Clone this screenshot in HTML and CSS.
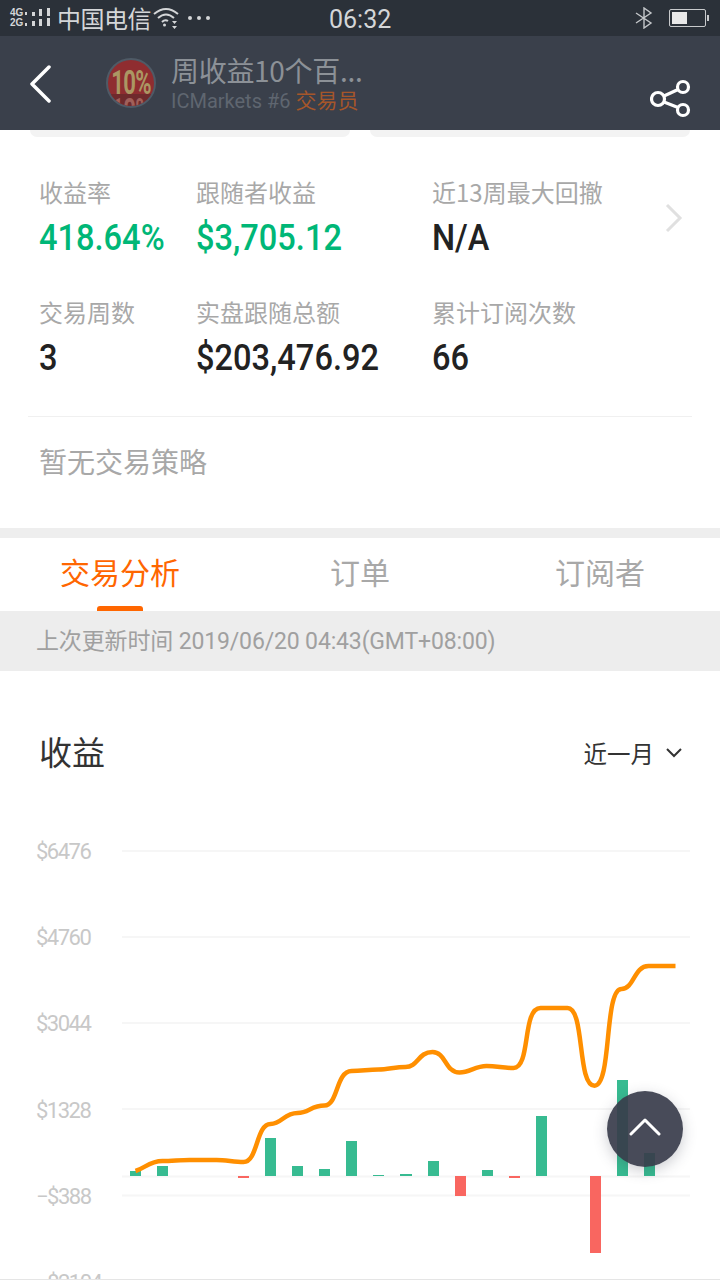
FILE: index.html
```html
<!DOCTYPE html>
<html lang="zh-CN">

<head>
  <meta charset="UTF-8">
  <meta name="viewport" content="width=device-width, initial-scale=1.0">
  <title>周收益10个百</title>
  <link rel="stylesheet" href="styles.css">
</head>

<body>
  <div class="page">
    <!-- status bar -->
    <div class="status">
      <div class="status-left">
        <div class="net"><span>4G</span><span>2G</span></div>
        <svg class="signal" width="26" height="26" viewBox="0 0 26 26" fill="#d4d6d8">
          <rect x="0" y="4" width="2" height="3" />
          <rect x="7" y="4" width="3" height="4" />
          <rect x="14" y="1" width="3" height="7" />
          <rect x="22" y="0" width="3" height="8" />
          <rect x="0" y="15" width="2" height="3" />
          <rect x="7" y="13" width="3" height="5" />
          <rect x="14" y="11" width="3" height="7" />
          <rect x="22" y="10" width="3" height="8" />
        </svg>
        <span class="carrier">中国电信</span>
        <svg class="wifi" width="26" height="24" viewBox="0 0 26 24" fill="none" stroke="#d4d6d8" stroke-width="2">
          <path d="M1 8 Q13 -2 25 8" />
          <path d="M5 12 Q13 5 21 12" />
          <path d="M9 16 Q12 13 15 15" />
          <circle cx="11.500" cy="19" r="1.500" fill="#d4d6d8" stroke="none" />
          <path d="M19 15 l2.500 3 l2.500 -3 z M19 20 h5 l-2.500 3 z" fill="#d4d6d8" stroke="none" />
        </svg>
        <div class="dots"><i></i><i></i><i></i></div>
      </div>
      <span class="time">06:32</span>
      <div class="status-right">
        <svg width="18" height="22" viewBox="0 0 18 22" fill="none" stroke="#c4c7ca" stroke-width="1.400">
          <path d="M1 6 L16 16 L9 21 V1 L16 6 L1 16" />
        </svg>
        <div class="battery"><div class="battery-fill"></div></div>
        <div class="battery-tip"></div>
      </div>
    </div>

    <!-- nav -->
    <div class="nav">
      <svg class="back" width="26" height="40" viewBox="0 0 26 40" fill="none" stroke="#fff" stroke-width="3.500" stroke-linecap="round" stroke-linejoin="round">
        <path d="M21 2 L4 19 L21 36" />
      </svg>
      <svg class="avatar" width="50" height="50" viewBox="0 0 50 50">
        <clipPath id="avatarClip"><circle cx="25" cy="25" r="23" /></clipPath>
        <circle cx="25" cy="25" r="24" fill="#8f2d30" stroke="#4f5a66" stroke-width="2" />
        <g clip-path="url(#avatarClip)">
          <rect x="0" y="36" width="50" height="14" fill="#6f2a2c" />
          <text class="avatar-echo" transform="translate(25 64) scale(0.65 1)">10%</text>
          <text class="avatar-text" transform="translate(25 36) scale(0.65 1)">10%</text>
        </g>
      </svg>
      <div class="title-box">
        <div class="title">周收益10个百...</div>
        <div class="sub">ICMarkets #6 <span class="role">交易员</span></div>
      </div>
      <svg class="share" width="42" height="40" viewBox="0 0 42 40" fill="none" stroke="#fff" stroke-width="3.200">
        <circle cx="8" cy="21" r="6.500" />
        <circle cx="33" cy="9" r="5.500" />
        <circle cx="33" cy="32" r="5.500" />
        <path d="M14 18 L28 11.500 M14 24 L28 29.500" />
      </svg>
    </div>

    <div class="pills"><div class="pill"></div><div class="pill"></div></div>

    <!-- stats -->
    <div class="stats">
      <div class="stat">
        <div class="stat-label">收益率</div>
        <div class="stat-value up">418.64%</div>
      </div>
      <div class="stat">
        <div class="stat-label">跟随者收益</div>
        <div class="stat-value up">$3,705.12</div>
      </div>
      <div class="stat">
        <div class="stat-label">近13周最大回撤</div>
        <div class="stat-value">N/A</div>
      </div>
      <svg class="more" width="18" height="30" viewBox="0 0 18 30" fill="none" stroke="#e0e0e0" stroke-width="3">
        <path d="M2 2 L15 15 L2 28" />
      </svg>
      <div class="stat">
        <div class="stat-label">交易周数</div>
        <div class="stat-value">3</div>
      </div>
      <div class="stat">
        <div class="stat-label">实盘跟随总额</div>
        <div class="stat-value">$203,476.92</div>
      </div>
      <div class="stat">
        <div class="stat-label">累计订阅次数</div>
        <div class="stat-value">66</div>
      </div>
    </div>

    <div class="divider"></div>
    <div class="strategy">暂无交易策略</div>
    <div class="band"></div>

    <!-- tabs -->
    <div class="tabs">
      <div class="tab active">交易分析</div>
      <div class="tab">订单</div>
      <div class="tab">订阅者</div>
    </div>
    <div class="updated">上次更新时间 2019/06/20 04:43(GMT+08:00)</div>

    <div class="chart-head">
      <div class="chart-title">收益</div>
      <div class="range">
        <span>近一月</span>
        <svg width="16" height="10" viewBox="0 0 16 10" fill="none" stroke="#333" stroke-width="2">
          <path d="M1 1 L8 8 L15 1" />
        </svg>
      </div>
    </div>

    <!-- chart, drawn in page coordinates -->
    <div class="chart">
      <svg width="720" height="479" viewBox="0 801 720 479">
        <g class="grid">
          <path d="M122 851 H690" />
          <path d="M122 937 H690" />
          <path d="M122 1023 H690" />
          <path d="M122 1109 H690" />
          <path d="M122 1176.500 H690" />
          <path d="M122 1195.500 H690" />
        </g>
        <g class="axis">
          <text x="36" y="859">$6476</text>
          <text x="36" y="945">$4760</text>
          <text x="36" y="1031">$3044</text>
          <text x="36" y="1118">$1328</text>
          <text x="36" y="1204">−$388</text>
          <text x="36" y="1290">−$2104</text>
        </g>
        <g class="bars-up">
          <rect x="130" y="1171" width="11" height="5" />
          <rect x="157" y="1166" width="11" height="10" />
          <rect x="265" y="1138" width="11" height="38" />
          <rect x="292" y="1166" width="11" height="10" />
          <rect x="319" y="1169" width="11" height="7" />
          <rect x="346" y="1141" width="11" height="35" />
          <rect x="373" y="1175" width="11" height="1" />
          <rect x="400" y="1174" width="12" height="2" />
          <rect x="428" y="1161" width="11" height="15" />
          <rect x="482" y="1170" width="11" height="6" />
          <rect x="536" y="1116" width="11" height="60" />
          <rect x="617" y="1080" width="11" height="96" />
          <rect x="644" y="1153" width="11" height="23" />
        </g>
        <g class="bars-down">
          <rect x="238" y="1176" width="11" height="2" />
          <rect x="455" y="1176" width="11" height="20" />
          <rect x="509" y="1176" width="11" height="2" />
          <rect x="590" y="1176" width="11" height="77" />
        </g>
        <path class="profit-line" d="M135.500 1171 C145 1168,150 1161,162.500 1161 C172 1161,180 1160,189.500 1160 C198 1160,207 1160,216.500 1160 C226 1160,234 1162,243.500 1162 C258 1162,256 1124,270.500 1124 C282 1124,284 1113,297.500 1113 C309 1113,311 1105.600,324.500 1105.600 C338 1105.600,336 1071,351.500 1071 C362 1071,368 1069.500,378.500 1069.500 C388 1069.500,395 1067,405.500 1067 C418 1067,418 1052,432.500 1052 C446 1052,445 1072.500,459.500 1072.500 C470 1072.500,475 1066,486.500 1066 C497 1066,503 1068,513.500 1068 C531 1068,522 1008,540.500 1008 C550 1008,558 1008,567.500 1008 C585 1008,577 1085.700,594.500 1085.700 C612 1085.700,604 989,621.500 989 C634 989,634 966,648.500 966 L675.500 966" />
      </svg>
    </div>

    <div class="to-top">
      <svg width="32" height="20" viewBox="0 0 32 20" fill="none" stroke="#fff" stroke-width="3" stroke-linecap="round" stroke-linejoin="round">
        <path d="M2 17 L16 3 L30 17" />
      </svg>
    </div>
  </div>
</body>

</html>
```

FILE: styles.css
```css
* {
  box-sizing: border-box;
}

body {
  margin: 0;
  background-color: #fff;
  font-family: "Noto Sans CJK SC", "Liberation Sans", sans-serif;
}

.page {
  position: relative;
  width: 720px;
  height: 1280px;
  overflow: hidden;
}

/* status bar */
.status {
  position: relative;
  display: flex;
  align-items: center;
  justify-content: space-between;
  height: 36px;
  padding: 0 10px;
  background-color: #2b3139;
  color: #d4d6d8;
}

.status-left {
  display: flex;
  align-items: center;
}

.net {
  display: flex;
  flex-direction: column;
  width: 15px;
  font-family: "Liberation Sans", sans-serif;
  font-size: 10px;
  font-weight: 700;
  line-height: 10px;
}

.signal {
  margin-top: 6px;
}

.carrier {
  margin-left: 6px;
  font-size: 24px;
  letter-spacing: -0.5px;
  line-height: 36px;
}

.wifi {
  margin-left: 2px;
}

.dots {
  display: flex;
  gap: 5px;
  margin-left: 9px;
}

.dots i {
  width: 4px;
  height: 4px;
  border-radius: 50%;
  background-color: #d4d6d8;
}

.time {
  position: absolute;
  left: 329px;
  top: 1px;
  font-family: "Roboto", sans-serif;
  font-size: 25px;
  line-height: 38px;
}

.status-right {
  display: flex;
  align-items: center;
  margin-right: 1px;
}

.battery {
  width: 37px;
  height: 18px;
  margin-left: 16px;
  padding: 2px;
  border: 1px solid #c8cacc;
  border-radius: 2px;
}

.battery-fill {
  width: 15px;
  height: 100%;
  background-color: #e8e8e8;
}

.battery-tip {
  width: 2px;
  height: 6px;
  margin-left: 1px;
  background-color: #c8cacc;
}

/* nav */
.nav {
  display: flex;
  align-items: center;
  height: 94px;
  padding: 0 28px;
  background-color: #3a404b;
}

.back {
  margin-top: 3px;
}

.avatar {
  margin-left: 52px;
  flex-shrink: 0;
}

.avatar-text,
.avatar-echo {
  font-family: "Roboto", sans-serif;
  font-size: 34px;
  font-weight: 700;
  text-anchor: middle;
  letter-spacing: -1px;
  fill: #ab9763;
}

.avatar-echo {
  fill: #a0605a;
}

.title-box {
  margin-left: 15px;
}

.title {
  color: #8c9197;
  font-size: 28px;
  letter-spacing: -0.3px;
  line-height: 34px;
}

.sub {
  margin-top: 1px;
  color: #5f6670;
  font-family: "Roboto", "Noto Sans CJK SC", sans-serif;
  font-size: 20px;
  line-height: 26px;
}

.role {
  color: #a5562a;
  font-size: 21px;
}

.share {
  margin-left: auto;
  margin-top: 30px;
}

.pills {
  display: flex;
  gap: 20px;
  height: 7px;
  padding: 0 30px;
}

.pill {
  flex: 1;
  border-radius: 0 0 12px 12px;
  background-color: #f3f3f3;
}

/* stats */
.stats {
  display: grid;
  grid-template-columns: 157px 236px 233px auto;
  row-gap: 34px;
  padding: 38px 0 0 39px;
}

.stat-label {
  color: #a8a8a8;
  font-size: 24px;
  line-height: 34px;
}

.stat-value {
  margin-top: 6px;
  color: #222;
  font-family: "Roboto", sans-serif;
  font-size: 36px;
  font-weight: 500;
  line-height: 46px;
  transform: scaleX(0.905);
  transform-origin: left center;
}

.stat-value.up {
  color: #00b777;
}

.more {
  align-self: center;
}

.divider {
  height: 1px;
  margin: 35px 28px 0;
  background-color: #f0f0f0;
}

.strategy {
  padding: 24px 39px 47px;
  color: #a8a8a8;
  font-size: 28px;
  line-height: 40px;
}

.band {
  height: 10px;
  background-color: #eee;
}

/* tabs */
.tabs {
  display: grid;
  grid-template-columns: repeat(3, 240px);
  height: 73px;
}

.tab {
  position: relative;
  padding-top: 11px;
  color: #a8a8a8;
  font-size: 30px;
  line-height: 44px;
  text-align: center;
}

.tab.active {
  color: #ff6600;
}

.tab.active::after {
  content: "";
  position: absolute;
  left: 97px;
  bottom: 0;
  width: 46px;
  height: 5px;
  border-radius: 3px 3px 0 0;
  background-color: #ff6600;
}

.updated {
  height: 60px;
  padding: 2px 0 0 36px;
  background-color: #ededed;
  color: #a0a0a0;
  font-family: "Roboto", "Noto Sans CJK SC", sans-serif;
  font-size: 23px;
  letter-spacing: -0.15px;
  line-height: 58px;
}

/* chart */
.chart-head {
  display: flex;
  align-items: flex-start;
  justify-content: space-between;
  height: 130px;
  padding: 56px 38px 0 39px;
}

.chart-title {
  color: #333;
  font-size: 33px;
  line-height: 48px;
}

.range {
  display: flex;
  align-items: center;
  gap: 12px;
  margin-top: 2px;
  color: #333;
  font-size: 23.500px;
  line-height: 48px;
}

.chart {
  height: 479px;
  border-bottom: 1px solid #e5e5e5;
  overflow: hidden;
}

.chart svg {
  display: block;
}

.grid path {
  stroke: #f6f6f6;
  stroke-width: 2;
}

.axis text {
  fill: #c8c8c8;
  font-family: "Roboto", sans-serif;
  font-size: 22px;
  letter-spacing: -1.500px;
}

.bars-up rect {
  fill: #37bb91;
}

.bars-down rect {
  fill: #f96660;
}

.profit-line {
  fill: none;
  stroke: #ff8f00;
  stroke-width: 4.500;
}

.to-top {
  position: absolute;
  left: 607px;
  top: 1091px;
  display: flex;
  align-items: center;
  justify-content: center;
  width: 76px;
  height: 76px;
  border-radius: 50%;
  background-color: rgba(56, 60, 75, 0.92);
  box-shadow: 0 4px 14px rgba(56, 60, 75, 0.25);
}

.to-top svg {
  margin-top: -4px;
}
```
